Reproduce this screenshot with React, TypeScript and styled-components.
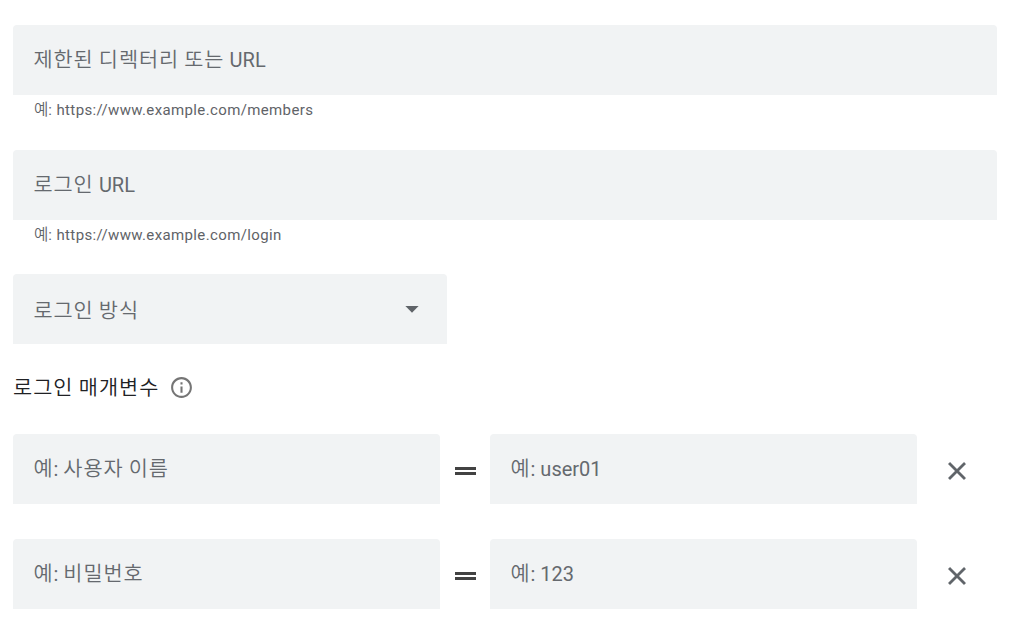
import React from 'react';
import styled, { createGlobalStyle } from 'styled-components';

const Global = createGlobalStyle`
  * { box-sizing: border-box; }
  body { margin: 0; background: #fff; font-family: Roboto, "Noto Sans CJK KR", sans-serif; }
`;

const Form = styled.form`
  width: 1025px;
  height: 632px;
  padding: 25px 28px 0 13px;
  overflow: hidden;
`;

const FieldGroup = styled.div<{ $height: number }>`
  height: ${p => p.$height}px;
`;

const Field = styled.div<{ $width?: number }>`
  display: flex;
  align-items: center;
  justify-content: space-between;
  width: ${p => (p.$width ? `${p.$width}px` : '100%')};
  height: 70px;
  padding: 0 21px 0 20.5px;
  border-radius: 4px 4px 0 0;
  background: #f1f3f4;
  color: #65696e;
`;

const Label = styled.span<{ $drop?: number }>`
  padding-top: ${p => p.$drop ?? 0}px;
  font-size: 20px;
  line-height: 28px;
  white-space: pre;
`;

const Korean = styled.span<{ $tracking?: number }>`
  font-size: 1.04em;
  font-weight: 350;
  line-height: 1;
  letter-spacing: ${p => p.$tracking ?? 0.9}px;
  word-spacing: -0.7px;
`;

const Hint = styled.div`
  padding: 5px 21px 0;
  font-size: 15px;
  line-height: 20px;
  letter-spacing: 0.37px;
  color: #5f6368;
  white-space: pre;
`;

const Heading = styled.div`
  display: flex;
  align-items: center;
  gap: 10px;
  height: 26px;
  margin-bottom: 34px;
  font-size: 20px;
  color: #202124;
`;

const HeadingText = styled.span`
  padding-top: 2px;
  line-height: 26px;
`;

const Row = styled.div`
  display: flex;
  align-items: center;
  height: 70px;
  margin-bottom: 35px;
`;

const IconSlot = styled.span<{ $width: number }>`
  display: flex;
  justify-content: center;
  width: ${p => p.$width}px;
  padding-top: 4px;
`;

const Icon = styled.svg`
  display: block;
  flex: none;
`;

const EqualsIcon = () => (
  <Icon width="22" height="8" viewBox="0 0 22 8" fill="#424242">
    <path d="M1 0h21v3H1zM1 5h21v3H1z" />
  </Icon>
);

const CloseIcon = () => (
  <Icon width="30" height="30" viewBox="0 0 24 24" fill="#5f6368" stroke="#5f6368" strokeWidth="0.3">
    <path d="M19 6.41 17.59 5 12 10.59 6.41 5 5 6.41 10.59 12 5 17.59 6.41 19 12 13.41 17.59 19 19 17.59 13.41 12z" />
  </Icon>
);

const InfoIcon = () => (
  <Icon width="25" height="25" viewBox="0 0 24 24" fill="#757575">
    <path d="M11 7h2v2h-2zm0 4h2v6h-2zm1-9C6.48 2 2 6.48 2 12s4.48 10 10 10 10-4.48 10-10S17.52 2 12 2zm0 18c-4.41 0-8-3.59-8-8s3.59-8 8-8 8 3.59 8 8-3.59 8-8 8z" />
  </Icon>
);

const ArrowIcon = () => (
  <Icon width="28" height="7" viewBox="0 0 28 7" fill="#5f6368">
    <path d="M7.4 0h13.2L14 6.8z" />
  </Icon>
);

function ParameterRow({ name, value }: { name: string; value: string }) {
  return (
    <Row>
      <Field $width={427}>
        <Label><Korean>예</Korean>: <Korean>{name}</Korean></Label>
      </Field>
      <IconSlot $width={50}><EqualsIcon /></IconSlot>
      <Field $width={427}>
        <Label><Korean>예</Korean>: {value}</Label>
      </Field>
      <IconSlot $width={80}><CloseIcon /></IconSlot>
    </Row>
  );
}

export default function App() {
  return (
    <Form>
      <Global />
      <FieldGroup $height={125}>
        <Field><Label><Korean>제한된 디렉터리 또는 </Korean>URL</Label></Field>
        <Hint><Korean $tracking={0}>예</Korean>: https://www.example.com/members</Hint>
      </FieldGroup>
      <FieldGroup $height={124}>
        <Field><Label><Korean>로그인 </Korean>URL</Label></Field>
        <Hint><Korean $tracking={0}>예</Korean>: https://www.example.com/login</Hint>
      </FieldGroup>
      <FieldGroup $height={100}>
        <Field $width={434}>
          <Label $drop={3}><Korean>로그인 방식</Korean></Label>
          <ArrowIcon />
        </Field>
      </FieldGroup>
      <Heading><HeadingText><Korean $tracking={1}>로그인 매개변수</Korean></HeadingText><InfoIcon /></Heading>
      <ParameterRow name="사용자 이름" value="user01" />
      <ParameterRow name="비밀번호" value="123" />
    </Form>
  );
}
